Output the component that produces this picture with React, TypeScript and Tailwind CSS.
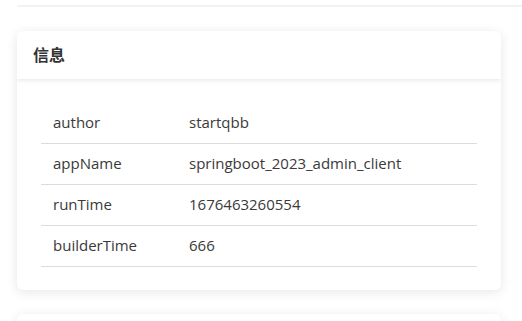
import React from 'react';

const rows = [
  { key: 'author', value: 'startqbb' },
  { key: 'appName', value: 'springboot_2023_admin_client' },
  { key: 'runTime', value: '1676463260554' },
  { key: 'builderTime', value: '666' },
];

const App: React.FC = () => {
  return (
    <div className="min-h-screen bg-white pt-[5px] font-['Open_Sans','Noto_Sans_CJK_SC',sans-serif] text-[#333]">
      <div className="ml-[17px] h-[2px] bg-[#f2f2f2]"></div>

      <div className="ml-[17px] mr-[21px] mt-[24px] overflow-hidden rounded-md bg-white shadow-[0_2px_12px_rgba(0,0,0,0.1)]">
        <div className="relative h-[48px] flex items-center px-4 shadow-[0_2px_4px_rgba(0,0,0,0.08)]">
          <h3 className="text-base font-bold text-[#333]">信息</h3>
        </div>
        <div className="px-6 pt-[23px] pb-[23px]">
          <table className="w-full border-collapse text-[15px]">
            <tbody>
              {rows.map((row) => (
                <tr key={row.key} className="h-[41px] border-b border-[#dcdcdc]">
                  <td className="w-[148px] px-3 text-[#3a3a3a]">{row.key}</td>
                  <td className="px-0 text-[#3a3a3a]">{row.value}</td>
                </tr>
              ))}
            </tbody>
          </table>
        </div>
      </div>

      <div className="ml-[17px] mr-[21px] mt-[24px] h-[20px] rounded-md bg-white shadow-[0_2px_12px_rgba(0,0,0,0.1)]"></div>
    </div>
  );
};

export default App;
